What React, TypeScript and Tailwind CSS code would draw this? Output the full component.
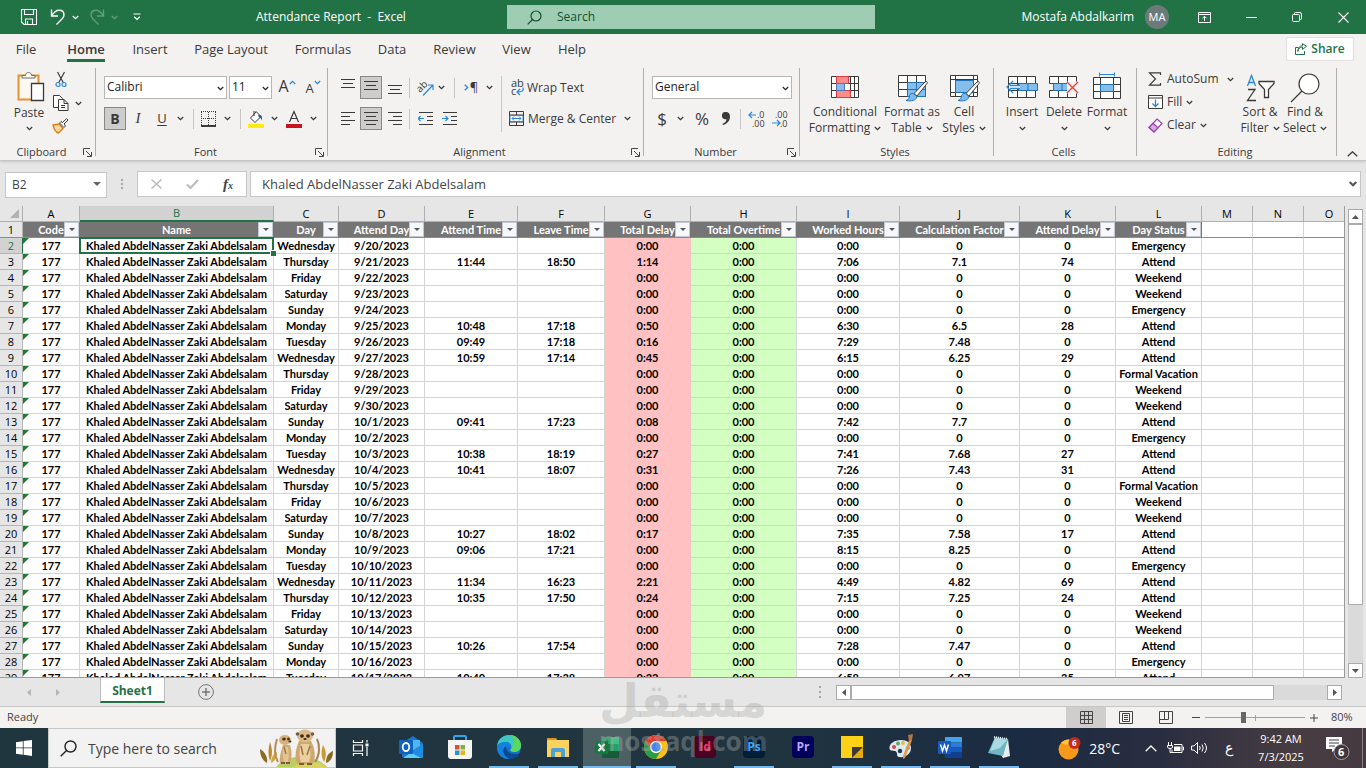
import { useState, type ReactNode } from 'react';
import clsx from 'clsx';

type Row = [string, string, string, string, string, string, string, string, string];

const EMPLOYEE = 'Khaled AbdelNasser Zaki Abdelsalam';

// day, date, attend, leave, delay, worked, factor, delay minutes, status
const rows: Row[] = [
  ['Wednesday', '9/20/2023', '', '', '0:00', '0:00', '0', '0', 'Emergency'],
  ['Thursday', '9/21/2023', '11:44', '18:50', '1:14', '7:06', '7.1', '74', 'Attend'],
  ['Friday', '9/22/2023', '', '', '0:00', '0:00', '0', '0', 'Weekend'],
  ['Saturday', '9/23/2023', '', '', '0:00', '0:00', '0', '0', 'Weekend'],
  ['Sunday', '9/24/2023', '', '', '0:00', '0:00', '0', '0', 'Emergency'],
  ['Monday', '9/25/2023', '10:48', '17:18', '0:50', '6:30', '6.5', '28', 'Attend'],
  ['Tuesday', '9/26/2023', '09:49', '17:18', '0:16', '7:29', '7.48', '0', 'Attend'],
  ['Wednesday', '9/27/2023', '10:59', '17:14', '0:45', '6:15', '6.25', '29', 'Attend'],
  ['Thursday', '9/28/2023', '', '', '0:00', '0:00', '0', '0', 'Formal Vacation'],
  ['Friday', '9/29/2023', '', '', '0:00', '0:00', '0', '0', 'Weekend'],
  ['Saturday', '9/30/2023', '', '', '0:00', '0:00', '0', '0', 'Weekend'],
  ['Sunday', '10/1/2023', '09:41', '17:23', '0:08', '7:42', '7.7', '0', 'Attend'],
  ['Monday', '10/2/2023', '', '', '0:00', '0:00', '0', '0', 'Emergency'],
  ['Tuesday', '10/3/2023', '10:38', '18:19', '0:27', '7:41', '7.68', '27', 'Attend'],
  ['Wednesday', '10/4/2023', '10:41', '18:07', '0:31', '7:26', '7.43', '31', 'Attend'],
  ['Thursday', '10/5/2023', '', '', '0:00', '0:00', '0', '0', 'Formal Vacation'],
  ['Friday', '10/6/2023', '', '', '0:00', '0:00', '0', '0', 'Weekend'],
  ['Saturday', '10/7/2023', '', '', '0:00', '0:00', '0', '0', 'Weekend'],
  ['Sunday', '10/8/2023', '10:27', '18:02', '0:17', '7:35', '7.58', '17', 'Attend'],
  ['Monday', '10/9/2023', '09:06', '17:21', '0:00', '8:15', '8.25', '0', 'Attend'],
  ['Tuesday', '10/10/2023', '', '', '0:00', '0:00', '0', '0', 'Emergency'],
  ['Wednesday', '10/11/2023', '11:34', '16:23', '2:21', '4:49', '4.82', '69', 'Attend'],
  ['Thursday', '10/12/2023', '10:35', '17:50', '0:24', '7:15', '7.25', '24', 'Attend'],
  ['Friday', '10/13/2023', '', '', '0:00', '0:00', '0', '0', 'Weekend'],
  ['Saturday', '10/14/2023', '', '', '0:00', '0:00', '0', '0', 'Weekend'],
  ['Sunday', '10/15/2023', '10:26', '17:54', '0:00', '7:28', '7.47', '0', 'Attend'],
  ['Monday', '10/16/2023', '', '', '0:00', '0:00', '0', '0', 'Emergency'],
  ['Tuesday', '10/17/2023', '10:40', '17:38', '0:32', '6:58', '6.97', '35', 'Attend'],
];

const columns = [
  { letter: 'A', title: 'Code', width: 57 },
  { letter: 'B', title: 'Name', width: 194 },
  { letter: 'C', title: 'Day', width: 65 },
  { letter: 'D', title: 'Attend Day', width: 86 },
  { letter: 'E', title: 'Attend Time', width: 93 },
  { letter: 'F', title: 'Leave Time', width: 87 },
  { letter: 'G', title: 'Total Delay', width: 86 },
  { letter: 'H', title: 'Total Overtime', width: 106 },
  { letter: 'I', title: 'Worked Hours', width: 103 },
  { letter: 'J', title: 'Calculation Factor', width: 120 },
  { letter: 'K', title: 'Attend Delay', width: 96 },
  { letter: 'L', title: 'Day Status', width: 86 },
  { letter: 'M', title: '', width: 51 },
  { letter: 'N', title: '', width: 51 },
  { letter: 'O', title: '', width: 51 },
];

const tabs = [
  { label: 'File', width: 'w-[52px]' },
  { label: 'Home', width: 'w-[68px]' },
  { label: 'Insert', width: 'w-[60px]' },
  { label: 'Page Layout', width: 'w-[102px]' },
  { label: 'Formulas', width: 'w-[82px]' },
  { label: 'Data', width: 'w-[56px]' },
  { label: 'Review', width: 'w-[69px]' },
  { label: 'View', width: 'w-[55px]' },
  { label: 'Help', width: 'w-[56px]' },
];

function Chevron({ className = '' }: { className?: string }) {
  return (
    <svg className={clsx('w-[7px] h-[5px] shrink-0', className)} viewBox="0 0 7 5" fill="none" stroke="currentColor" strokeWidth="1.3">
      <path d="M.8 1l2.700 2.600L6.200 1" />
    </svg>
  );
}

function Launcher({ label }: { label: string }) {
  return (
    <button aria-label={label} className="text-[#444]">
      <svg className="w-[9px] h-[9px]" viewBox="0 0 9 9" fill="none" stroke="currentColor">
        <path d="M.5 7V.5H7M3 3l5 5M8.5 4v4.5H4" />
      </svg>
    </button>
  );
}

function VLine({ className }: { className: string }) {
  return <div className={clsx('w-px bg-[#c8c6c4] shrink-0', className)} />;
}

function Group({ name, width, launcher, children }: { name: string; width: string; launcher?: boolean; children: ReactNode }) {
  return (
    <section className={clsx('flex shrink-0', width)}>
      <div className="flex-1 flex flex-col min-w-0">
        <div className="h-[76px] flex">{children}</div>
        <div className="h-4 flex items-center text-[11px] leading-4 pr-[3px]">
          <span className="flex-1 text-center">{name}</span>
          {launcher && <Launcher label={`${name} settings`} />}
        </div>
      </div>
      <div className="w-px h-[88px] bg-[#b1afad]" />
    </section>
  );
}

function IconButton({ label, width = 'w-[22px]', active, children }: { label: string; width?: string; active?: boolean; children: ReactNode }) {
  return (
    <button
      aria-label={label}
      className={clsx('h-[23px] flex items-center justify-center shrink-0', width, active && 'bg-[#cfcdcb] border border-[#8a8886]')}
    >
      {children}
    </button>
  );
}

// text lines drawn as [x, width] pairs, 4px apart
function Lines({ lines }: { lines: [number, number][] }) {
  return (
    <svg className="w-[16px] h-[14px] shrink-0" viewBox="0 0 16 14" stroke="#3b3a39">
      {lines.map(([x, w], i) => (
        <path key={i} d={`M${x} ${i * 4 + 0.5}h${w}`} />
      ))}
    </svg>
  );
}

function Combo({ label, value, width }: { label: string; value: string; width: string }) {
  return (
    <div className={clsx('relative h-[23px] shrink-0', width)}>
      <select aria-label={label} className="block appearance-none w-full h-full bg-white border border-[#b9b7b5] pl-[2px] pb-[2px] text-[12px] leading-5 text-[#252423]">
        <option>{value}</option>
      </select>
      <Chevron className="absolute right-[3px] top-[10px] pointer-events-none text-[#252423]" />
    </div>
  );
}

function BigButton({ icon, lines, width }: { icon: ReactNode; lines: [string, string?]; width: string }) {
  return (
    <button className={clsx('flex flex-col items-center pt-[3px] leading-4 whitespace-nowrap shrink-0', width)}>
      <span className="h-[33px] flex items-center justify-center">{icon}</span>
      <span className="h-4">{lines[0]}</span>
      <span className="h-4 flex items-center gap-[4px]">
        {lines[1]}
        <Chevron />
      </span>
    </button>
  );
}

function TitleBar() {
  return (
    <header className="h-[34px] shrink-0 bg-[#217346] text-white flex items-center text-[12px]">
      <div className="flex items-center w-[256px] pl-[20px]">
        <button aria-label="Save">
          <svg className="w-[18px] h-[18px]" viewBox="0 0 18 18" fill="none" stroke="currentColor" strokeWidth="1.1">
            <path d="M1.5 1.5h15v15H4L1.5 14zM4.500 1.500v5h9v-5M5.500 16.500V11h7v5.500M7.500 13v3" />
          </svg>
        </button>
        <button aria-label="Undo" className="flex items-center gap-[6px] ml-[12px]">
          <svg className="w-[16px] h-[18px]" viewBox="0 0 16 18" fill="none" stroke="currentColor" strokeWidth="1.4">
            <path d="M1.500 1.500V8H8M1.800 7.700C4 4.200 6.300 2.300 9 2.300c3 0 5 2 5 4.700 0 1.700-.8 2.900-2 4l-5.500 5.500" />
          </svg>
          <Chevron />
        </button>
        <button aria-label="Redo" className="flex items-center gap-[6px] ml-[10px] opacity-30">
          <svg className="w-[16px] h-[18px]" viewBox="0 0 16 18" fill="none" stroke="currentColor" strokeWidth="1.4">
            <path d="M14.500 1.500V8H8M14.200 7.700C12 4.200 9.700 2.300 7 2.300c-3 0-5 2-5 4.700 0 1.700.8 2.900 2 4l5.500 5.500" />
          </svg>
          <Chevron />
        </button>
        <button aria-label="Customize toolbar" className="ml-[15px]">
          <svg className="w-[8px] h-[8px]" viewBox="0 0 8 8" fill="none" stroke="currentColor" strokeWidth="1.2">
            <path d="M.5 1h7M1.200 3.800L4 6.500l2.800-2.700" />
          </svg>
        </button>
      </div>
      <h1 className="w-[251px] whitespace-pre">Attendance Report  -  Excel</h1>
      <label className="h-6 w-[368px] bg-[#9fcdb3] flex items-center pl-[20px] gap-[15px] text-[#0f5132]">
        <svg className="w-[15px] h-[15px]" viewBox="0 0 15 15" fill="none" stroke="currentColor" strokeWidth="1.2">
          <circle cx="9" cy="6" r="5" />
          <path d="M5.500 9.500L.7 14.300" />
        </svg>
        <input aria-label="Search" placeholder="Search" className="flex-1 min-w-0 bg-transparent outline-none placeholder:text-[#0f5132] placeholder:opacity-100" />
      </label>
      <div className="flex-1 flex items-center justify-end">
        <span>Mostafa Abdalkarim</span>
        <button aria-label="Account" className="ml-[11px] w-6 h-6 rounded-full bg-[#6d7a7c] text-[11px]">MA</button>
        <button aria-label="Ribbon display options" className="ml-[29px]">
          <svg className="w-[13px] h-[11px]" viewBox="0 0 13 11" fill="none" stroke="currentColor">
            <path d="M.5.5h12v10H.5zM.5 2.500h12M6.500 9V4.500M4.500 6.300l2-2 2 2" />
          </svg>
        </button>
        <button aria-label="Minimize" className="ml-[35px] w-[11px] h-px bg-white" />
        <button aria-label="Restore" className="ml-[35px]">
          <svg className="w-[10px] h-[10px]" viewBox="0 0 10 10" fill="none" stroke="currentColor">
            <rect x=".5" y="2.500" width="7" height="7" rx="1" />
            <path d="M2.500 2.500v-1q0-1 1-1H8Q9.500.5 9.500 2v4.500q0 1-1 1h-1" />
          </svg>
        </button>
        <button aria-label="Close" className="ml-[36px] mr-[17px]">
          <svg className="w-[11px] h-[11px]" viewBox="0 0 11 11" stroke="currentColor" strokeWidth="1.1">
            <path d="M.5.5l10 10M10.500.5l-10 10" />
          </svg>
        </button>
      </div>
    </header>
  );
}

function RibbonTabs() {
  const [active, setActive] = useState('Home');
  return (
    <nav className="h-[34px] shrink-0 flex text-[13px]">
      {tabs.map(tab => (
        <button
          key={tab.label}
          onClick={() => setActive(tab.label)}
          className={clsx('flex flex-col items-center pt-[5px] whitespace-nowrap', tab.width, active === tab.label && 'font-semibold')}
        >
          <span className="leading-5">{tab.label}</span>
          {active === tab.label && <span className="w-[38px] h-[3px] bg-[#217346]" />}
        </button>
      ))}
      <div className="flex-1 flex justify-end pr-[12px] pt-[3px]">
        <button className="h-[24px] w-[68px] bg-white border border-[#e1dfdd] rounded-[2px] flex items-center justify-center gap-[4px] font-semibold text-[12px] text-[#217346]">
          <svg className="w-[12px] h-[12px]" viewBox="0 0 12 12" fill="none" stroke="currentColor">
            <path d="M3.500 4.500h-3v7h9V8M2.800 8.500C3.300 5.500 5 4 7.500 4v2.500l4-3.300L7.500.7v2C4.500 2.900 2.900 5 2.800 8.500z" />
          </svg>
          Share
        </button>
      </div>
    </nav>
  );
}

function ClipboardGroup() {
  return (
    <Group name="Clipboard" width="w-[96px]" launcher>
      <button className="w-[46px] ml-[6px] pt-[3px] flex flex-col items-center text-[12px] leading-4">
        <svg className="w-[34px] h-[32px]" viewBox="-5 0 34 32" fill="none">
          <path d="M1.500 4.500h20v24h-20z" fill="#fdf8f0" stroke="#e8912d" strokeWidth="2" />
          <path d="M5 7V4.500h3.500c0-4 6-4 6 0H18V7z" fill="#fff" stroke="#6b6967" />
          <path d="M14.500 12.500h12v17h-12z" fill="#fff" stroke="#3b3a39" strokeWidth="1.3" />
        </svg>
        <span className="mt-[2px]">Paste</span>
        <Chevron className="mt-[5px]" />
      </button>
      <div className="flex flex-col pt-[3px] gap-[7px]">
        <button aria-label="Cut" className="ml-[3px]">
          <svg className="w-[12px] h-[17px]" viewBox="0 0 12 17" fill="none" strokeWidth="1.2">
            <path d="M2.500 1l6 11M9.500 1l-6 11" stroke="#3b3a39" />
            <circle cx="3" cy="13.500" r="2" stroke="#2b88d8" />
            <circle cx="9" cy="13.500" r="2" stroke="#2b88d8" />
          </svg>
        </button>
        <button aria-label="Copy" className="flex items-center gap-[6px]">
          <svg className="w-[17px] h-[16px]" viewBox="0 0 17 16" fill="#fff" stroke="#3b3a39">
            <path d="M1.500.5h6l3 3v9h-9z" />
            <path d="M6.500 4.500H12l4 4v7H6.500zM12 4.500v4h4M9 10.500h4M9 12.500h4" />
          </svg>
          <Chevron />
        </button>
        <button aria-label="Format painter">
          <svg className="w-[17px] h-[16px]" viewBox="0 0 17 16" fill="none">
            <path d="M1 7l6-1 4 4.500L6.500 15C4 14.500 2 11 1 7z" fill="#fbd9a5" stroke="#e07c12" strokeWidth="1.3" />
            <path d="M7.500 5L12 9.500 13.500 8 12 6l4-4-1.500-1.300-4 3.800L9 3.500z" fill="#fff" stroke="#3b3a39" />
          </svg>
        </button>
      </div>
    </Group>
  );
}

function FontGroup() {
  return (
    <Group name="Font" width="w-[232px]" launcher>
      <div className="pl-[8px] pt-[8px] flex flex-col gap-[8px]">
        <div className="flex items-center gap-[2px]">
          <Combo label="Font" value="Calibri" width="w-[123px]" />
          <Combo label="Font size" value="11" width="w-[43px]" />
          <IconButton label="Grow font" width="w-[26px]">
            <span className="text-[16px] leading-5 pb-[3px]">A</span>
            <Chevron className="rotate-180 self-start mt-[4px] text-[#2b88d8]" />
          </IconButton>
          <IconButton label="Shrink font" width="w-[22px]">
            <span className="text-[13px] leading-5">A</span>
            <Chevron className="self-start mt-[4px] text-[#2b88d8]" />
          </IconButton>
        </div>
        <div className="flex items-center">
          <IconButton label="Bold" active><b className="text-[14px]">B</b></IconButton>
          <IconButton label="Italic" width="w-[24px]"><i className="font-['Liberation_Serif',serif] text-[15px]">I</i></IconButton>
          <IconButton label="Underline" width="w-[24px]"><span className="text-[13px] underline underline-offset-2">U</span></IconButton>
          <IconButton label="Underline styles" width="w-[13px]"><Chevron /></IconButton>
          <VLine className="h-5 ml-[6px] mr-[6px]" />
          <IconButton label="Borders" width="w-[18px]">
            <svg className="w-[16px] h-[16px]" viewBox="0 0 16 16" stroke="#3b3a39">
              <path d="M0 .5h15M.5 1v13M14.500 1v13M7.500 1v13M0 7.500h15" strokeDasharray="1 1" />
              <path d="M0 15h15" strokeWidth="2" />
            </svg>
          </IconButton>
          <IconButton label="Border styles" width="w-[18px]"><Chevron /></IconButton>
          <VLine className="h-5 mx-[4px]" />
          <IconButton label="Fill color" width="w-[22px]">
            <svg className="w-[16px] h-[18px]" viewBox="0 0 16 18" fill="none">
              <path d="M8 2L2.500 8 7 12.500l6-6-5-5zM6 1v5" fill="#fff" stroke="#3b3a39" />
              <path d="M10 5c3.500-.5 4.500 1.500 4 5.500-1-2.500-2-3-3-3z" fill="#1f5f9e" />
              <path d="M0 14h16v4H0z" fill="#ffeb14" />
            </svg>
          </IconButton>
          <IconButton label="Fill colors" width="w-[14px]"><Chevron /></IconButton>
          <IconButton label="Font color" width="w-[26px]">
            <svg className="w-[16px] h-[18px]" viewBox="0 0 16 18" fill="none">
              <path d="M3.500 12L8 1.500 12.500 12M5 8.500h6" stroke="#3b3a39" strokeWidth="1.2" />
              <path d="M0 14h16v4H0z" fill="#c8141e" />
            </svg>
          </IconButton>
          <IconButton label="Font colors" width="w-[12px]"><Chevron /></IconButton>
        </div>
      </div>
    </Group>
  );
}

function Indent({ flip }: { flip?: boolean }) {
  return (
    <svg className="w-[15px] h-[14px]" viewBox="0 0 15 14" fill="none">
      <path d="M1 .5h14M9 4.500h6M9 8.500h6M1 12.500h14" stroke="#3b3a39" />
      <path d={flip ? 'M0 6.500h6M3.500 4L6 6.500 3.500 9' : 'M0 6.500h6M2.500 4L0 6.500 2.500 9'} stroke="#2b88d8" strokeWidth="1.2" />
    </svg>
  );
}

function AlignmentGroup() {
  return (
    <Group name="Alignment" width="w-[316px]" launcher>
      <div className="pl-[8px] pt-[8px] flex flex-col gap-[8px] w-[173px]">
        <div className="flex items-center">
          <IconButton label="Top align" width="w-[24px]"><span className="pb-[4px]"><Lines lines={[[1, 14], [3, 10], [1, 14]]} /></span></IconButton>
          <IconButton label="Middle align" active><Lines lines={[[1, 14], [3, 10], [1, 14]]} /></IconButton>
          <IconButton label="Bottom align" width="w-[25px]"><span className="pt-[8px]"><Lines lines={[[1, 14], [3, 10], [1, 14]]} /></span></IconButton>
          <VLine className="h-5 ml-[2px] mr-[6px]" />
          <IconButton label="Orientation" width="w-[18px]">
            <svg className="w-[17px] h-[16px] overflow-visible" viewBox="0 0 17 16" fill="none">
              <text x="3" y="13" fontSize="10" fill="#3b3a39" transform="rotate(-45 3 13)">ab</text>
              <path d="M6 15.500l9.500-10M11 5h5v5" stroke="#2b88d8" strokeWidth="1.2" />
            </svg>
          </IconButton>
          <IconButton label="Orientations" width="w-[14px]"><Chevron /></IconButton>
          <VLine className="h-5 ml-[6px] mr-[6px]" />
          <IconButton label="Text direction" width="w-[20px]">
            <svg className="w-[5px] h-[7px] mr-px" viewBox="0 0 5 7" fill="none" stroke="#2b88d8" strokeWidth="1.300"><path d="M.7.7l3 2.800-3 2.800" /></svg>
            <span className="text-[13px]">¶</span>
          </IconButton>
          <IconButton label="Text directions" width="w-[16px]"><Chevron /></IconButton>
        </div>
        <div className="flex items-center">
          <IconButton label="Align left" width="w-[24px]"><Lines lines={[[1, 14], [1, 9], [1, 14], [1, 9]]} /></IconButton>
          <IconButton label="Center" active><Lines lines={[[1, 14], [3, 10], [1, 14], [3, 10]]} /></IconButton>
          <IconButton label="Align right" width="w-[25px]"><Lines lines={[[1, 14], [6, 9], [1, 14], [6, 9]]} /></IconButton>
          <VLine className="h-5 ml-[2px] mr-[3px]" />
          <IconButton label="Decrease indent" width="w-[24px]"><Indent /></IconButton>
          <IconButton label="Increase indent" width="w-[24px]"><Indent flip /></IconButton>
        </div>
      </div>
      <VLine className="h-14 mt-[8px]" />
      <div className="pl-[7px] pt-[8px] flex flex-col gap-[8px] text-[12px]">
        <button className="h-[23px] flex items-center gap-[3px]">
          <svg className="w-[15px] h-[17px] overflow-visible" viewBox="0 0 15 17" fill="none">
            <text x="2" y="8" fontSize="11" fill="#3b3a39">ab</text>
            <text x="2" y="16" fontSize="11" fill="#3b3a39">c</text>
            <path d="M14 8.500c1 3-1 4.500-5.500 4.500M11 10l-3 3 3 3" stroke="#2b88d8" strokeWidth="1.2" />
          </svg>
          Wrap Text
        </button>
        <button className="h-[23px] flex items-center gap-[4px]">
          <svg className="w-[15px] h-[15px]" viewBox="0 0 15 15" fill="none">
            <path d="M.5.5h14v14H.5zM.5 4h14M.5 11h14M7.500.5V4M7.500 11v3.500" stroke="#3b3a39" />
            <path d="M1 4.500h13v6H1z" fill="#fff" stroke="#2b88d8" />
            <path d="M3 7.500h9M5 5.500l-2 2 2 2M10 5.500l2 2-2 2" stroke="#2b88d8" />
          </svg>
          Merge &amp; Center
          <Chevron className="ml-[4px]" />
        </button>
      </div>
    </Group>
  );
}

function NumberGroup() {
  return (
    <Group name="Number" width="w-[156px]" launcher>
      <div className="pl-[8px] pt-[8px] flex flex-col gap-[8px]">
        <Combo label="Number format" value="General" width="w-[140px]" />
        <div className="flex items-center">
          <IconButton label="Accounting format" width="w-[20px]"><span className="text-[17px]">$</span></IconButton>
          <IconButton label="Currencies" width="w-[16px]"><Chevron /></IconButton>
          <IconButton label="Percent" width="w-[28px]"><span className="text-[17px]">%</span></IconButton>
          <IconButton label="Comma style" width="w-[20px]">
            <svg className="w-[8px] h-[13px]" viewBox="0 0 8 13" fill="#3b3a39">
              <path d="M4 0a3.600 3.600 0 0 0-1 7.200c.9.200 1.500 0 1.500 0C4.300 9.500 3 11 .5 11.800L1 13C5.500 11.800 8 8.500 8 4.500 8 1.500 6.500 0 4 0z" />
            </svg>
          </IconButton>
          <VLine className="h-5 ml-[4px] mr-[7px]" />
          <IconButton label="Increase decimal" width="w-[18px]">
            <svg className="w-[16px] h-[16px] overflow-visible" viewBox="0 0 16 16" fill="none">
              <text x="8" y="7" fontSize="9" fill="#3b3a39">.0</text>
              <text x="3" y="16" fontSize="9" fill="#3b3a39">.00</text>
              <path d="M0 4h7M3 1L0 4l3 3" stroke="#2b88d8" strokeWidth="1.2" />
            </svg>
          </IconButton>
          <IconButton label="Decrease decimal" width="w-[28px]">
            <svg className="w-[16px] h-[16px] overflow-visible" viewBox="0 0 16 16" fill="none">
              <text x="3" y="7" fontSize="9" fill="#3b3a39">.00</text>
              <text x="8" y="16" fontSize="9" fill="#3b3a39">.0</text>
              <path d="M0 12h8M5 9l3 3-3 3" stroke="#2b88d8" strokeWidth="1.2" />
            </svg>
          </IconButton>
        </div>
      </div>
    </Group>
  );
}

function Brush() {
  return (
    <>
      <path d="M29.500 7.500c1 .6 1 1.200.4 2.200L20 22l-3-2.500L28 8z" fill="#fff" stroke="#3b3a39" />
      <path d="M16.500 19.500l3.500 3c-1 4-5 5-11 4 3-1 3-2.500 3.500-5 .5-1.500 2-2.500 4-2z" fill="#7cb9ec" stroke="#2272b9" />
    </>
  );
}

function StylesGroup() {
  return (
    <Group name="Styles" width="w-[194px]">
      <div className="flex pl-[8px] text-[12px]">
        <BigButton
          width="w-[74px]"
          lines={['Conditional', 'Formatting']}
          icon={
            <svg className="w-[28px] h-[23px]" viewBox="0 0 28 23" fill="none">
              <path d="M.5.5h27v21H.5z" fill="#fff" stroke="#3b3a39" />
              <path d="M.5 7.500h27M.5 14.500h27M5.500.5v21M19.500.5v21M23.500.5v21" stroke="#3b3a39" />
              <path d="M5.500.5h12v7h-12zM5.500 14.500h14v7h-14z" fill="#ff8c8c" stroke="#e03a3a" />
              <path d="M5.500 7.500h8v7h-8z" fill="#8db9e8" stroke="#4a7ab8" />
            </svg>
          }
        />
        <BigButton
          width="w-[60px]"
          lines={['Format as', 'Table']}
          icon={
            <svg className="w-[31px] h-[28px]" viewBox="0 0 31 28" fill="none">
              <path d="M1.500 1.500h27v21h-27z" fill="#fff" stroke="#3b3a39" />
              <path d="M10.500 8.500h18v14h-18z" fill="#83beec" />
              <path d="M1.500 8.500h27M1.500 15.500h27M10.500 1.500v21M19.500 1.500v21" stroke="#3b3a39" />
              <path d="M10.500 8.500h18v14h-18zM10.500 15.500h18M19.500 8.500v14" stroke="#2272b9" />
              <Brush />
            </svg>
          }
        />
        <BigButton
          width="w-[44px]"
          lines={['Cell', 'Styles']}
          icon={
            <svg className="w-[31px] h-[28px]" viewBox="0 0 31 28" fill="none">
              <path d="M1.500 1.500h27v21h-27zM1.500 5.500h27M1.500 18.500h27M6.500 1.500v21M24.500 1.500v21" fill="#fff" stroke="#3b3a39" />
              <path d="M6.500 6.500h18v12h-18z" fill="#83beec" stroke="#2272b9" />
              <Brush />
            </svg>
          }
        />
      </div>
    </Group>
  );
}

function CellsGroup() {
  return (
    <Group name="Cells" width="w-[143px]">
      <div className="flex pl-[7px] text-[12px]">
        <BigButton
          width="w-[42px]"
          lines={['Insert']}
          icon={
            <svg className="w-[32px] h-[23px]" viewBox="0 0 32 23" fill="none">
              <path d="M2.500.5h27v21h-27zM11.500.5v21M20.500.5v21M2.500 7.500h27M2.500 14.500h27" fill="#fff" stroke="#3b3a39" />
              <path d="M12.500 7.500h19v7h-19zM22 7.500v7" fill="#83beec" stroke="#2272b9" />
              <path d="M6.500 9H14v4H6.500z" fill="#fff" />
              <path d="M14 9.500H4M14 12.500H4M7 5l-6 6 6 6" stroke="#2b88d8" strokeWidth="1.3" />
            </svg>
          }
        />
        <BigButton
          width="w-[42px]"
          lines={['Delete']}
          icon={
            <svg className="w-[30px] h-[23px]" viewBox="0 0 30 23" fill="none">
              <path d="M.5.5h27v7H.5zM.5 14.500h27v7H.5zM9.500.5v7M18.500.5v7M9.500 14.500v7M18.500 14.500v7" fill="#fff" stroke="#3b3a39" />
              <path d="M4.500 7.500h15v7h-15zM13 7.500v7" fill="#83beec" stroke="#2272b9" />
              <path d="M18 5.500h11v12H18z" fill="#f3f2f1" />
              <path d="M18 6l11 11M29 6L18 17" stroke="#e8443c" strokeWidth="1.4" />
            </svg>
          }
        />
        <BigButton
          width="w-[44px]"
          lines={['Format']}
          icon={
            <svg className="w-[28px] h-[32px]" viewBox="0 0 28 32" fill="none">
              <path d="M6 2.500h15M6.500.5v4M21.500.5v4" stroke="#2b88d8" />
              <path d="M.5 5.500h27v21H.5zM.5 12.500h27M.5 19.500h27M7.500 5.500v21M20.500 5.500v21" fill="#fff" stroke="#3b3a39" />
              <path d="M7.500 12.500h13v7h-13z" fill="#83beec" stroke="#2272b9" />
            </svg>
          }
        />
      </div>
    </Group>
  );
}

function EditingGroup() {
  return (
    <Group name="Editing" width="w-[200px]">
      <div className="flex pl-[11px] text-[12px]">
        <div className="flex flex-col w-[89px] pt-[2px] gap-[5px] leading-[18px]">
          <button className="flex items-center gap-[5px] whitespace-nowrap">
            <svg className="w-[14px] h-[14px] shrink-0" viewBox="0 0 14 14" fill="none" stroke="#3b3a39" strokeWidth="1.2">
              <path d="M12.500 3V.8h-11l6 6.200-6 6.200h11V11" />
            </svg>
            AutoSum
            <Chevron className="ml-[3px]" />
          </button>
          <button className="flex items-center gap-[4px]">
            <svg className="w-[15px] h-[14px]" viewBox="0 0 15 14" fill="none">
              <path d="M.5.5h14v13H.5zM.5 3h14" fill="#fff" stroke="#3b3a39" />
              <path d="M7.500 4.500v7M4.500 8.500l3 3 3-3" stroke="#2b88d8" strokeWidth="1.3" />
            </svg>
            Fill
            <Chevron />
          </button>
          <button className="flex items-center gap-[4px]">
            <svg className="w-[15px] h-[15px]" viewBox="0 0 15 15" fill="none" stroke="#9b3fb0" strokeWidth="1.2">
              <path d="M9 1l5 4.500L6 14 1 9.500z" fill="#fff" />
              <path d="M5 5.300l5 4.500L6 14 1 9.500z" fill="#d9a5e3" />
            </svg>
            Clear
            <Chevron />
          </button>
        </div>
        <BigButton
          width="w-[46px]"
          lines={['Sort &', 'Filter']}
          icon={
            <svg className="w-[29px] h-[28px]" viewBox="0 0 29 28" fill="none" strokeWidth="1.3">
              <path d="M1.500 12l4-10.500 4 10.500M3 8.500h5" stroke="#2b88d8" />
              <path d="M2 15.500h7l-7.500 11H10" stroke="#3b3a39" />
              <path d="M13 7.500h15v2l-5.500 6v8h-4v-8L13 9.500z" fill="#fff" stroke="#3b3a39" />
            </svg>
          }
        />
        <BigButton
          width="w-[44px]"
          lines={['Find &', 'Select']}
          icon={
            <svg className="w-[30px] h-[30px]" viewBox="0 0 30 30" fill="none" stroke="#3b3a39" strokeWidth="1.2">
              <circle cx="19" cy="11" r="10" fill="#fff" />
              <path d="M12 18L1 29" />
            </svg>
          }
        />
      </div>
    </Group>
  );
}

function Ribbon() {
  return (
    <div className="h-[92px] shrink-0 flex overflow-hidden">
      <ClipboardGroup />
      <FontGroup />
      <AlignmentGroup />
      <NumberGroup />
      <StylesGroup />
      <CellsGroup />
      <EditingGroup />
      <div className="flex-1 flex items-end justify-end pr-[8px] pb-[3px]">
        <button aria-label="Collapse ribbon">
          <svg className="w-[11px] h-[6px]" viewBox="0 0 11 6" fill="none" stroke="#3b3a39" strokeWidth="1.3">
            <path d="M.7 5.300L5.500.8l4.800 4.500" />
          </svg>
        </button>
      </div>
    </div>
  );
}

function FormulaBar() {
  return (
    <div className="shrink-0 flex items-stretch h-[26px] mt-[10px] mb-[9px] px-[5px] text-[#444]">
      <div className="relative w-[102px]">
        <input aria-label="Name box" defaultValue="B2" className="w-full h-full bg-white border border-[#c6c6c6] pl-[6px] text-[12px]" />
        <svg className="absolute right-[6px] top-[11px] w-[8px] h-[4px]" viewBox="0 0 8 4" fill="#666"><path d="M0 0h8L4 4z" /></svg>
      </div>
      <div className="w-[30px] flex flex-col items-center justify-center gap-[2px]">
        <span className="size-[2px] bg-[#a6a6a6]" />
        <span className="size-[2px] bg-[#a6a6a6]" />
        <span className="size-[2px] bg-[#a6a6a6]" />
      </div>
      <div className="w-[110px] bg-white border border-[#c6c6c6] flex items-center">
        <button aria-label="Cancel" className="w-[36px] flex justify-center">
          <svg className="w-[11px] h-[10px]" viewBox="0 0 11 10" stroke="#bdbdbd" strokeWidth="1.5"><path d="M.5.5l10 9M10.500.5l-10 9" /></svg>
        </button>
        <button aria-label="Enter" className="w-[36px] flex justify-center">
          <svg className="w-[13px] h-[10px]" viewBox="0 0 13 10" fill="none" stroke="#bdbdbd" strokeWidth="2.2"><path d="M1 5.500L4.500 9 12 1" /></svg>
        </button>
        <button aria-label="Insert function" className="w-[36px] font-['Liberation_Serif',serif] italic text-[15px] font-bold">
          f<span className="text-[10px]">x</span>
        </button>
      </div>
      <div className="relative flex-1 ml-[3px]">
        <input aria-label="Formula" defaultValue={EMPLOYEE} className="w-full h-full bg-white border border-[#c6c6c6] pl-[11px] text-[13px]" />
        <svg className="absolute right-[4px] top-[10px] w-[8px] h-[6px]" viewBox="0 0 8 6" fill="none" stroke="#555" strokeWidth="2"><path d="M.7 1L4 4.300 7.300 1" /></svg>
      </div>
    </div>
  );
}

function FilterButton({ title }: { title: string }) {
  return (
    <button aria-label={`Filter ${title}`} className="absolute right-0 top-0 w-[15px] h-[15px] bg-[#f5f7fa] border border-[#c3c9d2] flex items-center justify-center">
      <svg className="w-[6px] h-[3px]" viewBox="0 0 6 3" fill="#555"><path d="M0 0h6L3 3z" /></svg>
    </button>
  );
}

const cell = 'h-4 p-0 border-r border-b border-[#d4d4d4] overflow-hidden whitespace-nowrap leading-[15px] text-center';
const rowHead = "h-4 p-0 border-r border-b border-[#b5b5b5] font-['Open_Sans',sans-serif] font-normal text-[11px] leading-[15px] text-center";

function Sheet() {
  return (
    <div className="flex-1 min-w-0 overflow-hidden border-r border-b border-[#9b9b9b]">
      <table className="table-fixed border-separate border-spacing-0 w-[1355px] text-black">
        <colgroup>
          <col style={{ width: 23 }} />
          {columns.map(c => <col key={c.letter} style={{ width: c.width }} />)}
        </colgroup>
        <thead>
          <tr className="bg-[#e6e6e6] text-[11px]">
            <td className="h-4 p-0 border-r border-b border-[#b0b0b0]">
              <svg className="ml-auto mr-[3px] w-[9px] h-[9px]" viewBox="0 0 9 9" fill="#b2b2b2"><path d="M9 0v9H0z" /></svg>
            </td>
            {columns.map(c => (
              <th
                key={c.letter}
                className={clsx(
                  'h-4 p-0 border-r border-[#b0b0b0] font-normal text-center',
                  c.letter === 'B' ? 'bg-[#d2d2d2] text-[#217346] border-b-2 border-b-[#217346] leading-[14px]' : 'border-b leading-[15px]',
                )}
              >
                {c.letter}
              </th>
            ))}
          </tr>
        </thead>
        <tbody className="bg-white font-['Lato',sans-serif] font-bold text-[11px]">
          <tr>
            <th className={clsx(rowHead, 'bg-[#e6e6e6] border-b-[#8c8c8c]')}>1</th>
            {columns.map(c => (
              <th
                key={c.letter}
                className={clsx(
                  'relative h-4 p-0 border-b border-[#8c8c8c] border-r overflow-hidden whitespace-nowrap leading-[15px] text-center',
                  c.title ? 'bg-[#757575] text-white border-r-[#757575]' : 'border-r-[#d4d4d4]',
                )}
              >
                {c.title}
                {c.title && <FilterButton title={c.title} />}
              </th>
            ))}
          </tr>
          {rows.map(([day, date, start, end, delay, worked, factor, minutes, status], i) => (
            <tr key={date}>
              <th className={clsx(rowHead, i === 0 ? 'bg-[#d2d2d2] text-[#217346] border-r-[#217346]' : 'bg-[#e6e6e6]')}>{i + 2}</th>
              <td className={clsx(cell, 'relative')}>
                <svg className="absolute left-0 top-0 w-[6px] h-[6px]" viewBox="0 0 6 6" fill="#1e7b34"><path d="M0 0h6L0 6z" /></svg>
                177
              </td>
              <td className={clsx(cell, i === 0 && 'relative overflow-visible')}>
                {EMPLOYEE}
                {i === 0 && (
                  <>
                    <span className="absolute -left-px -top-px -right-px -bottom-px border-2 border-[#217346]" />
                    <span className="absolute -right-[3px] -bottom-[3px] w-[6px] h-[6px] bg-[#217346] border-l border-t border-white" />
                  </>
                )}
              </td>
              <td className={cell}>{day}</td>
              <td className={cell}>{date}</td>
              <td className={cell}>{start}</td>
              <td className={cell}>{end}</td>
              <td className={clsx(cell, 'bg-[#ffc1c1] border-[#ffc1c1]')}>{delay}</td>
              <td className={clsx(cell, 'bg-[#d3ffc2] border-[#d3ffc2]')}>0:00</td>
              <td className={cell}>{worked}</td>
              <td className={cell}>{factor}</td>
              <td className={cell}>{minutes}</td>
              <td className={cell}>{status}</td>
              <td className={cell} />
              <td className={cell} />
              <td className={cell} />
            </tr>
          ))}
        </tbody>
      </table>
    </div>
  );
}

const scrollButton = 'w-[15px] h-[15px] shrink-0 bg-white border border-[#ababab] flex items-center justify-center';

function VerticalScroll() {
  return (
    <div className="w-[21px] shrink-0 px-[3px] pt-[3px] flex flex-col bg-[#e6e6e6]">
      <button aria-label="Scroll up" className={scrollButton}>
        <svg className="w-[7px] h-[4px]" viewBox="0 0 7 4" fill="#555"><path d="M0 4h7L3.500 0z" /></svg>
      </button>
      <div className="flex-1 flex flex-col bg-[#dadada]">
        <div className="grow-[380] basis-0 bg-white border border-[#ababab]" />
        <div className="grow-[58] basis-0" />
      </div>
      <button aria-label="Scroll down" className={scrollButton}>
        <svg className="w-[7px] h-[4px]" viewBox="0 0 7 4" fill="#555"><path d="M0 0h7L3.500 4z" /></svg>
      </button>
    </div>
  );
}

function SheetTabs() {
  return (
    <div className="h-7 shrink-0 flex bg-[#e6e6e6]">
      <div className="w-[100px] flex items-center pl-[27px] gap-[25px]">
        <button aria-label="Previous sheet"><svg className="w-[4px] h-[7px]" viewBox="0 0 4 7" fill="#b5b5b5"><path d="M4 0v7L0 3.500z" /></svg></button>
        <button aria-label="Next sheet"><svg className="w-[4px] h-[7px]" viewBox="0 0 4 7" fill="#b5b5b5"><path d="M0 0v7l4-3.500z" /></svg></button>
      </div>
      <button className="w-[65px] h-[25px] pt-[2px] bg-white border-x border-[#bdbdbd] border-b-2 border-b-[#217346] text-[12px] font-bold text-[#217346]">Sheet1</button>
      <button aria-label="New sheet" className="ml-[33px]">
        <svg className="w-[16px] h-[16px]" viewBox="0 0 16 16" fill="none" stroke="#777"><circle cx="8" cy="8" r="7.400" /><path d="M8 4v8M4 8h8" strokeWidth="1.5" /></svg>
      </button>
      <div className="flex-1 flex items-center justify-end pr-[24px]">
        <div className="flex flex-col gap-[3px] mr-[15px]">
          <span className="size-[2px] bg-[#a6a6a6]" />
          <span className="size-[2px] bg-[#a6a6a6]" />
          <span className="size-[2px] bg-[#a6a6a6]" />
        </div>
        <button aria-label="Scroll left" className={scrollButton}>
          <svg className="w-[4px] h-[7px]" viewBox="0 0 4 7" fill="#555"><path d="M4 0v7L0 3.500z" /></svg>
        </button>
        <div className="w-[476px] h-[15px] bg-[#dadada]"><div className="w-[423px] h-full bg-white border border-[#ababab]" /></div>
        <button aria-label="Scroll right" className={scrollButton}>
          <svg className="w-[4px] h-[7px]" viewBox="0 0 4 7" fill="#555"><path d="M0 0v7l4-3.500z" /></svg>
        </button>
      </div>
    </div>
  );
}

function StatusBar() {
  const [zoom, setZoom] = useState(38);
  return (
    <footer className="h-[22px] shrink-0 bg-[#f3f2f1] border-t border-[#c6c6c6] flex items-center text-[11px] text-[#444]">
      <span className="pl-[7px] flex-1">Ready</span>
      <button aria-label="Normal view" className="w-[40px] h-full bg-[#d0cecc] flex items-center justify-center">
        <svg className="w-[13px] h-[13px]" viewBox="0 0 13 13" fill="none" stroke="#444"><path d="M.5.5h12v12H.5zM.5 4.500h12M.5 8.500h12M4.500.5v12M8.500.5v12" /></svg>
      </button>
      <button aria-label="Page layout view" className="w-[40px] flex justify-center">
        <svg className="w-[14px] h-[13px]" viewBox="0 0 14 13" fill="none" stroke="#444"><path d="M.5.5h13v12H.5zM3.500 2.500h7v8h-7zM5 4.500h4M5 6.500h4M5 8.500h4" /></svg>
      </button>
      <button aria-label="Page break view" className="w-[40px] flex justify-center">
        <svg className="w-[14px] h-[13px]" viewBox="0 0 14 13" fill="none" stroke="#444"><path d="M.5.5h13v12H.5zM.5 8.500h9v-8M5.500.5v8" /></svg>
      </button>
      <button aria-label="Zoom out" className="w-[8px] h-px bg-[#444] ml-[6px]" />
      <div className="relative w-[100px] h-[12px] ml-[5px] flex items-center">
        <span className="absolute left-[50px] top-[3px] w-px h-[6px] bg-[#a0a0a0]" />
        <input
          aria-label="Zoom"
          type="range"
          value={zoom}
          onChange={e => setZoom(Number(e.target.value))}
          className="relative w-full h-px bg-[#a0a0a0] appearance-none [&::-webkit-slider-thumb]:appearance-none [&::-webkit-slider-thumb]:w-[5px] [&::-webkit-slider-thumb]:h-[11px] [&::-webkit-slider-thumb]:bg-[#666]"
        />
      </div>
      <button aria-label="Zoom in" className="ml-[5px]">
        <svg className="w-[8px] h-[8px]" viewBox="0 0 8 8" stroke="#444"><path d="M4 0v8M0 4h8" /></svg>
      </button>
      <span className="w-[48px] pl-[13px]">80%</span>
    </footer>
  );
}

function Meerkats() {
  return (
    <svg className="w-[76px] h-[38px] shrink-0" viewBox="0 0 76 38" fill="none">
      <path d="M17 38C24 30 34 27 45 28c11 1 19 5 23 10z" fill="#b9cf62" />
      <path d="M34 38c7-6 16-8 26-4 3 1 5 2 7 4z" fill="#d8d264" />
      <path d="M11 32C9 26 9 20 11 13c2 6 3 12 0 19z" fill="#b98a2b" />
      <path d="M8 34C3 31 1 26 1 20c5 3 8 8 7 14z" fill="#8a6a1f" />
      <path d="M12 34c0-5 2-9 6-11 0 5-2 9-6 11z" fill="#d3a63c" />
      <path d="M65 33c-3-5-3-11-1-17 3 5 4 11 1 17z" fill="#c79a35" />
      <path d="M67 34c0-6 2-10 7-12 0 6-2 10-7 12z" fill="#8a6a1f" />
      <path d="M19 33C14 24 16 16 18 10" stroke="#b98d55" strokeWidth="2" />
      <path d="M56 33c5-7 5-17 2-23" stroke="#a98350" strokeWidth="2" />
      <path d="M21 34c-1-5 1-12 3-18h7c2 6 2 13 0 18z" fill="#cfa973" />
      <path d="M24 18h5c1 5 1 10 0 15h-4c-1-5-2-10-1-15z" fill="#e3c592" />
      <ellipse cx="26" cy="11" rx="6" ry="5" fill="#d6b27c" />
      <ellipse cx="25" cy="10" rx="1.800" ry="1.500" fill="#4b331c" />
      <ellipse cx="29.500" cy="10" rx="1.400" ry="1.500" fill="#4b331c" />
      <ellipse cx="31" cy="12.500" rx="1.400" ry="1" fill="#3c2816" />
      <path d="M38 35c-3-7-1-16 2-23h12c4 7 5 16 2 23z" fill="#d0a86f" />
      <path d="M42 15h8c2 6 2 12 0 18h-8c-2-6-2-12 0-18z" fill="#e9d0a0" />
      <ellipse cx="46" cy="7" rx="8" ry="6.500" fill="#dcba85" />
      <circle cx="38.500" cy="5" r="1.800" fill="#7b5b35" />
      <circle cx="53.500" cy="5" r="1.800" fill="#7b5b35" />
      <ellipse cx="43" cy="7" rx="1.900" ry="1.700" fill="#3c2816" />
      <ellipse cx="49" cy="7" rx="1.900" ry="1.700" fill="#3c2816" />
      <ellipse cx="46" cy="10" rx="1.600" ry="1.100" fill="#3c2816" />
      <path d="M42 17l2 9M51 17l-3 9M25 18l2 7" stroke="#9c7441" strokeWidth="1.5" />
      <path d="M40 35h5M48 35h5M22 34h4M27 34h4" stroke="#7b5b35" strokeWidth="2" />
    </svg>
  );
}

function AdobeIcon({ text, bg, color }: { text: string; bg: string; color: string }) {
  return <span className={clsx('w-[22px] h-[22px] rounded-[4px] flex items-center justify-center text-[12px] font-bold', bg, color)}>{text}</span>;
}

const icon = 'w-[26px] h-[26px]';

const apps: { name: string; running?: boolean; active?: boolean; icon: ReactNode }[] = [
  {
    name: 'Outlook',
    icon: (
      <svg className={icon} viewBox="0 0 26 26">
        <path d="M4 9l11-7 10 7v14H4z" fill="#1b74c9" />
        <path d="M8 6h14v12H8z" fill="#4db6f5" />
        <path d="M5 24l20-14v12q0 2-2 2z" fill="#58d0f7" />
        <path d="M25 10l-13 8 11 6q2 0 2-2z" fill="#1d8be0" />
        <rect x="1" y="6" width="14" height="14" rx="1" fill="#0f62bd" />
        <ellipse cx="8" cy="13" rx="3.300" ry="4" fill="none" stroke="#fff" strokeWidth="1.8" />
      </svg>
    ),
  },
  {
    name: 'Microsoft Store',
    icon: (
      <svg className={icon} viewBox="0 0 26 26">
        <path d="M7 7V3q0-1 1-1h10q1 0 1 1v4" fill="none" stroke="#2fa4e7" strokeWidth="2" />
        <path d="M1 6h24v16q0 3-3 3H4q-3 0-3-3z" fill="#f5f5f5" />
        <path d="M8 11h4.500v4.500H8z" fill="#d8532c" />
        <path d="M13.500 11H18v4.500h-4.500z" fill="#7cb342" />
        <path d="M8 16.500h4.500V21H8z" fill="#2c8fd0" />
        <path d="M13.500 16.500H18V21h-4.500z" fill="#e8b023" />
      </svg>
    ),
  },
  {
    name: 'Edge',
    running: true,
    icon: (
      <svg className={icon} viewBox="0 0 26 26">
        <circle cx="13" cy="13" r="12" fill="#1a6fc9" />
        <path d="M1 12C2 5 7 1 13 1c7 0 12 5 12 10.500 0 4-3 6.500-6.500 6.500-3 0-4.500-1.500-4-2.500C17 12 14 8 9.500 8 5.500 8 2 10 1 12z" fill="#3cc8c0" />
        <path d="M15 1c6 1 10 5 10 10.500 0 4-3 6.500-6.500 6.500-3 0-4.500-1.500-4-2.500C18 12 20 6 15 1z" fill="#5bd65f" />
        <path d="M9.500 12C5 14 6 22 14 25c4 0 8-2 10-6-5 2.500-14 1-14.500-7z" fill="#0b4a8f" />
        <path d="M1 12c2-3 5-4 8.500-4 4.500 0 6.500 3.500 5 6.500-2-3-5-3-6.500-.5-2 3.500 0 9 6 11C6 25.500.5 20 1 12z" fill="#1583dc" />
      </svg>
    ),
  },
  {
    name: 'File Explorer',
    running: true,
    icon: (
      <svg className={icon} viewBox="0 0 26 26">
        <path d="M2 4h9l2 3H2z" fill="#d9981e" />
        <path d="M2 6h22v17H2z" fill="#fbd260" />
        <path d="M6 23v-7q0-2 2-2h10q2 0 2 2v7h-4v-5h-6v5z" fill="#4aa3d8" />
      </svg>
    ),
  },
  {
    name: 'Excel',
    running: true,
    active: true,
    icon: (
      <svg className={icon} viewBox="0 0 26 26">
        <path d="M8 3h9v7H8z" fill="#21a366" />
        <path d="M17 3h7q1 0 1 1v6h-8z" fill="#33c481" />
        <path d="M8 10h9v7H8z" fill="#107c41" />
        <path d="M17 10h8v7h-8z" fill="#21a366" />
        <path d="M8 17h17v6q0 1-1 1H8z" fill="#185c37" />
        <rect x="1" y="7" width="13" height="13" rx="1" fill="#107c41" />
        <path d="M4.500 10l6 7M10.500 10l-6 7" stroke="#fff" strokeWidth="2" />
      </svg>
    ),
  },
  {
    name: 'Chrome',
    running: true,
    icon: (
      <svg className={icon} viewBox="0 0 26 26">
        <circle cx="13" cy="13" r="12" fill="#fbc116" />
        <path d="M2.600 7A12 12 0 0 1 23.400 7H13a6 6 0 0 0-5.200 9z" fill="#e33b2e" />
        <path d="M2.600 7A12 12 0 0 0 13 25l5.200-9a6 6 0 0 1-10.400 0z" fill="#2a9d4a" />
        <circle cx="13" cy="13" r="6" fill="#fff" />
        <circle cx="13" cy="13" r="4.700" fill="#4285f4" />
      </svg>
    ),
  },
  { name: 'InDesign', icon: <AdobeIcon text="Id" bg="bg-[#49021f]" color="text-[#ff3366]" /> },
  { name: 'Photoshop', running: true, icon: <AdobeIcon text="Ps" bg="bg-[#001e36]" color="text-[#31a8ff]" /> },
  { name: 'Premiere Pro', icon: <AdobeIcon text="Pr" bg="bg-[#00005b]" color="text-[#b9a5ff]" /> },
  {
    name: 'Sticky Notes',
    running: true,
    icon: (
      <svg className={icon} viewBox="0 0 26 26">
        <path d="M2 2h22v11L13 24H2z" fill="#fdd116" />
        <path d="M13 13h11L13 24z" fill="#3d3a35" />
        <path d="M24 13v11H13z" fill="#e8a90c" />
      </svg>
    ),
  },
  {
    name: 'Paint',
    running: true,
    icon: (
      <svg className={icon} viewBox="0 0 26 26">
        <path d="M13 6c6 0 10 3 10 8 0 6-6 10-12 9-3-.5-1-4-3-5.500-2-1.500-6 .5-6.500-3C1 9.500 6.500 6 13 6z" fill="#dfe9f2" />
        <circle cx="6" cy="13" r="2" fill="#d04a4a" />
        <circle cx="10" cy="9.500" r="1.900" fill="#5aa84c" />
        <circle cx="15" cy="9" r="1.900" fill="#e5b93b" />
        <circle cx="12" cy="17" r="2.200" fill="#22384a" />
        <circle cx="20" cy="14" r="1.800" fill="#4c86d6" />
        <path d="M21 6h3l-7 18-2 1v-3z" fill="#e09a4a" />
        <path d="M20 1l5-1-1 6-3 1z" fill="#b8763c" />
      </svg>
    ),
  },
  {
    name: 'Word',
    running: true,
    icon: (
      <svg className={icon} viewBox="0 0 26 26">
        <path d="M8 3h16q1 0 1 1v4.500H8z" fill="#41a5ee" />
        <path d="M8 8.500h17v5H8z" fill="#2b7cd3" />
        <path d="M8 13.500h17v5H8z" fill="#185abd" />
        <path d="M8 18.500h17V23q0 1-1 1H8z" fill="#103f91" />
        <rect x="1" y="7" width="13" height="13" rx="1" fill="#185abd" />
        <path d="M3.500 10.500l2 6.500 2-6 2 6 2-6.500" fill="none" stroke="#fff" strokeWidth="1.4" />
      </svg>
    ),
  },
  {
    name: 'Notepad',
    running: true,
    icon: (
      <svg className={icon} viewBox="0 0 26 26">
        <path d="M22 5l2 17-7 2-2-3z" fill="#e8eef0" />
        <path d="M9 3l13 2-5 17L2 19z" fill="#6fb6c2" />
        <path d="M9 4l12 2-7 8-10 3z" fill="#a9dce2" />
        <path d="M8 3l14 2" stroke="#e6f1f2" strokeWidth="2" strokeDasharray="1 1" />
      </svg>
    ),
  },
];

function Taskbar() {
  return (
    <div className="h-10 shrink-0 flex text-white bg-[linear-gradient(90deg,#20363f_0%,#20353f_55%,#1b2b42_75%,#2a2d40_85%,#483d42_95%,#453a40_100%)]">
      <button aria-label="Start" className="w-12 flex items-center justify-center">
        <svg className="w-[16px] h-[16px]" viewBox="0 0 16 16" fill="#fff"><path d="M0 2.200l6.800-1v6.300H0zM7.600 1.100L16 0v7.500H7.600zM0 8.300h6.800v6.400L0 13.700zM7.600 8.300H16V16l-8.400-1.200z" /></svg>
      </button>
      <label className="w-[288px] bg-[#f2f2f2] border border-[#c8c8c8] flex items-center pl-[11px] text-[#333]">
        <svg className="w-[17px] h-[17px] shrink-0" viewBox="0 0 17 17" fill="none" stroke="#222" strokeWidth="1.4"><circle cx="10.500" cy="6.500" r="5.500" /><path d="M6.500 10.500L.7 16.300" /></svg>
        <input aria-label="Search Windows" placeholder="Type here to search" className="flex-1 min-w-0 ml-[11px] bg-transparent outline-none text-[14px] placeholder:text-[#444] placeholder:opacity-100" />
        <Meerkats />
      </label>
      <button aria-label="Task view" className="w-12 mr-[3px] flex items-center justify-center">
        <svg className="w-[17px] h-[16px]" viewBox="0 0 17 16" fill="none" stroke="#fff" strokeWidth="1.2"><path d="M1.500 0v2.500h9V0M1.500 5h9v6h-9zM1.500 16v-2.500h9V16M15 0v2.500M15 7v9" /><path d="M13.500 3.500h3v3h-3z" fill="#fff" stroke="none" /></svg>
      </button>
      <div className="flex gap-px">
        {apps.map(app => (
          <button key={app.name} aria-label={app.name} className={clsx('w-12 flex flex-col items-center', app.active && 'bg-[#4d6063]')}>
            <span className="flex-1 flex items-center">{app.icon}</span>
            <span className={clsx('h-[2px]', app.active ? 'w-full' : 'w-10', app.running && 'bg-[#76b9ed]')} />
          </button>
        ))}
      </div>
      <div className="flex-1 flex items-center justify-end">
        <button className="flex items-center gap-[8px] text-[14px]">
          <svg className="w-[23px] h-[23px]" viewBox="0 0 23 23">
            <circle cx="10.500" cy="12.500" r="10" fill="#f79a1c" />
            <path d="M3 6a10 10 0 0 1 8-3.500c2 3 0 8-8 3.500z" fill="#fdc13a" />
            <circle cx="16.500" cy="6" r="6" fill="#c42b1c" />
            <text x="14" y="9" fontSize="8" fontWeight="700" fill="#fff">6</text>
          </svg>
          28°C
        </button>
        <button aria-label="Hidden icons" className="ml-[25px]">
          <svg className="w-[12px] h-[7px]" viewBox="0 0 12 7" fill="none" stroke="#fff" strokeWidth="1.3"><path d="M.7 6.300L6 1l5.300 5.300" /></svg>
        </button>
        <button aria-label="Battery" className="ml-[10px]">
          <svg className="w-[17px] h-[12px]" viewBox="0 0 17 12" fill="none" stroke="#fff"><path d="M1.500 0v3M4.500 0v3M.5 3.500h5V5q0 1.500-2.500 1.500Q.5 6.500.5 5zM3 7v3.500h2M7 2.500h8v8H5v-3M15.500 5h1v3h-1" /><path d="M7 4.500h6.500V9H7z" fill="#fff" stroke="none" /></svg>
        </button>
        <button aria-label="Volume" className="ml-[7px]">
          <svg className="w-[17px] h-[14px]" viewBox="0 0 17 14" fill="none" stroke="#fff"><path d="M.5 5H3l3.500-3.500v11L3 9H.5zM8.500 5q1.500 2 0 4M11 3.500q2.500 3.500 0 7M13.500 2q4 5 0 10" /></svg>
        </button>
        <span className="ml-[17px] w-[10px] text-[14px] font-['DejaVu_Sans',sans-serif]">ع</span>
        <div className="ml-[21px] w-[50px] text-[11px] leading-[18px] flex flex-col items-center whitespace-nowrap">
          <span>9:42 AM</span>
          <span>7/3/2025</span>
        </div>
        <button aria-label="Notifications" className="ml-[19px]">
          <svg className="w-[26px] h-[26px]" viewBox="0 0 26 26"><path d="M1 2h16v12h-6l-4 3v-3H1z" fill="#fff" /><path d="M4 5h10M4 8h10M4 11h6" stroke="#453a40" /><circle cx="16.500" cy="17" r="7.500" fill="#40373c" stroke="#a59da0" /><text x="13" y="21" fontSize="11" fontWeight="700" fill="#fff">6</text></svg>
        </button>
        <span className="w-px h-full bg-[#8a8084] ml-[11px] mr-[3px]" />
      </div>
    </div>
  );
}

function Watermark() {
  return (
    <div className="absolute left-[600px] bottom-[12px] w-[166px] flex flex-col items-center pointer-events-none font-bold text-[#a8a8a8]/40">
      <span lang="ar" dir="rtl" className="font-['DejaVu_Sans',sans-serif] text-[46px] leading-[50px] whitespace-nowrap">مستقل</span>
      <span className="text-[26px] leading-[30px]">mostaql.com</span>
    </div>
  );
}

export default function App() {
  return (
    <div className="relative h-screen flex flex-col overflow-hidden bg-[#e6e6e6] text-[#3b3a39] font-['Open_Sans',sans-serif]">
      <TitleBar />
      <div className="shrink-0 bg-[#f3f2f1] border-b border-[#c8c6c4] shadow-sm">
        <RibbonTabs />
        <Ribbon />
      </div>
      <FormulaBar />
      <main className="flex-1 min-h-0 flex">
        <Sheet />
        <VerticalScroll />
      </main>
      <SheetTabs />
      <StatusBar />
      <Taskbar />
      <Watermark />
    </div>
  );
}
